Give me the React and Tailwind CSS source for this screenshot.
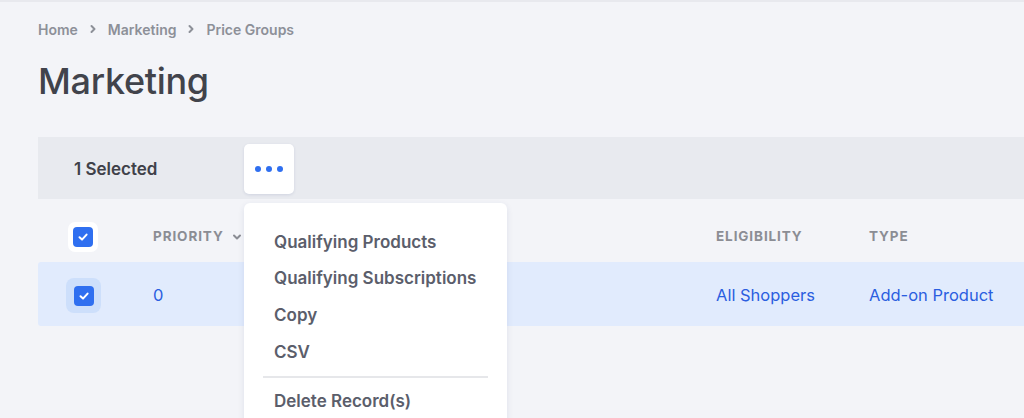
import React from "react";

function Check({ className = "" }) {
  return (
    <div className={"w-5 h-5 rounded-[4px] bg-[#2f6ff0] flex items-center justify-center " + className}>
      <svg width="12" height="12" viewBox="0 0 12 12" fill="none">
        <path d="M2.5 6.3 L5 8.6 L9.6 3.6" stroke="white" strokeWidth="2" strokeLinecap="round" strokeLinejoin="round" />
      </svg>
    </div>
  );
}

function Chevron({ className = "" }) {
  return (
    <svg className={className} width="8" height="10" viewBox="0 0 8 10" fill="none">
      <path d="M2.5 2 L5.5 5 L2.5 8" stroke="currentColor" strokeWidth="2" strokeLinecap="round" strokeLinejoin="round" />
    </svg>
  );
}

export default function App() {
  const menu = ["Qualifying Products", "Qualifying Subscriptions", "Copy", "CSV"];
  return (
    <div
      className="relative w-[1024px] h-[418px] overflow-hidden bg-[#f3f4f8] border-t-2 border-[#e8e9ee]"
      style={{ fontFamily: "Inter, 'Liberation Sans', sans-serif" }}
    >
      <div className="pl-[38px]">
        <nav className="flex items-center h-[24px] mt-[15px] text-[14px] font-semibold text-[#8d9098]">
          <span>Home</span>
          <Chevron className="mx-[11px] text-[#8d9098]" />
          <span>Marketing</span>
          <Chevron className="mx-[11px] text-[#8d9098]" />
          <span>Price Groups</span>
        </nav>
        <h1 className="mt-[18px] text-[36px] leading-[44px] font-medium text-[#41434b] tracking-[-0.3px]">Marketing</h1>

        <div className="mt-[34px] w-[1100px]">
          <div className="h-[62px] bg-[#e8eaef] flex items-center">
            <div className="w-[206px] pl-[36px] pt-[4px] text-[17px] font-semibold text-[#3f4149]">1 Selected</div>
            <div className="mt-[2px] w-[50px] h-[50px] bg-white rounded-[5px] shadow-[0_1px_3px_rgba(40,60,120,0.12)] flex items-center justify-center gap-[5px]">
              <span className="w-[6px] h-[6px] rounded-full bg-[#2f6ff0]" />
              <span className="w-[6px] h-[6px] rounded-full bg-[#2f6ff0]" />
              <span className="w-[6px] h-[6px] rounded-full bg-[#2f6ff0]" />
            </div>
          </div>

          <div className="h-[63px] pt-[12px] flex items-center text-[13.5px] font-bold tracking-[0.9px] text-[#8b8d94] uppercase">
            <div className="w-[115px] pl-[30px]">
              <div className="w-[30px] h-[30px] rounded-[7px] bg-white flex items-center justify-center">
                <Check />
              </div>
            </div>
            <div className="w-[563px] flex items-center gap-[8px]">
              <span>Priority</span>
              <svg width="10" height="8" viewBox="0 0 10 8" fill="none">
                <path d="M2 2.5 L5 5.5 L8 2.5" stroke="currentColor" strokeWidth="2" strokeLinecap="round" strokeLinejoin="round" />
              </svg>
            </div>
            <div className="w-[153px]">Eligibility</div>
            <div>Type</div>
          </div>

          <div className="h-[64px] pt-[3px] flex items-center bg-[#e1ebfd] rounded-l-[3px] text-[16.5px] text-[#2b5ee0]">
            <div className="w-[115px] pl-[28px]">
              <div className="w-[35px] h-[35px] rounded-[8px] bg-[#cddffb] flex items-center justify-center">
                <Check />
              </div>
            </div>
            <div className="w-[563px]">0</div>
            <div className="w-[153px]">All Shoppers</div>
            <div>Add-on Product</div>
          </div>
        </div>
      </div>

      <div className="absolute left-[244px] top-[201px] w-[263px] h-[240px] bg-white rounded-[6px] shadow-[0_2px_6px_rgba(40,60,120,0.10)] pt-[21px]">
        {menu.map((m) => (
          <div key={m} className="h-[36.7px] flex items-center pl-[30px] text-[17px] font-semibold text-[#5b5e6b]">
            {m}
          </div>
        ))}
        <div className="mx-[19px] mt-[5px] mb-[6px] h-[2px] bg-[#e6e7ea]" />
        <div className="h-[36px] flex items-center pl-[30px] text-[17px] font-semibold text-[#5b5e6b]">Delete Record(s)</div>
      </div>
    </div>
  );
}
